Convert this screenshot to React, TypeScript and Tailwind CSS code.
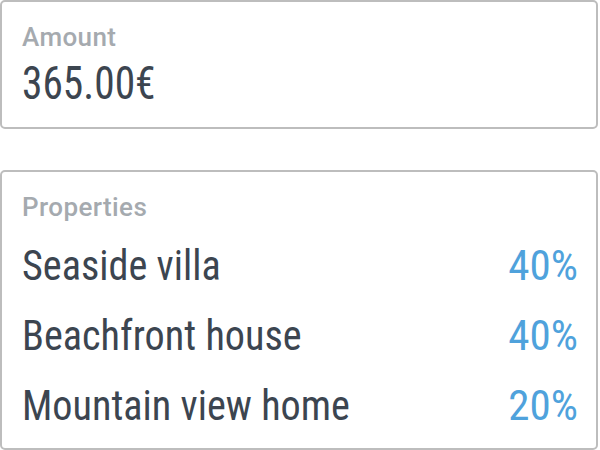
export default function App() {
  const rows = [
    { name: "Seaside villa", pct: "40%" },
    { name: "Beachfront house", pct: "40%" },
    { name: "Mountain view home", pct: "20%" },
  ];

  return (
    <main
      className="flex h-[450px] w-[600px] flex-col gap-[41px] bg-white pr-[2px]"
      style={{ fontFamily: "Roboto, 'Liberation Sans', sans-serif" }}
    >
      <section className="flex h-[129px] flex-col items-start rounded-[5px] border-2 border-[#bdbdbd] pl-5 pr-[18px] pt-[17px]">
        <span className="text-[26px] font-medium leading-[36px] tracking-[0.4px] text-[#a5aaaf]">
          Amount
        </span>
        <span className="mt-px inline-block origin-left scale-x-90 font-stretch-75% text-[46px] leading-[54px] text-[#3c4550]">
          365.00€
        </span>
      </section>
      <section className="flex flex-1 flex-col rounded-[5px] border-2 border-[#bdbdbd] pl-5 pr-[18px] pt-[17px]">
        <span className="text-[26px] font-medium leading-[36px] tracking-[0.4px] text-[#a5aaaf]">
          Properties
        </span>
        <div className="mt-[5px] flex flex-col">
          {rows.map((r) => (
            <div
              key={r.name}
              className="flex h-[70px] items-center justify-between font-stretch-75% text-[43px] leading-none"
            >
              <span className="inline-block origin-left scale-x-[0.935] text-[#3c4550]">
                {r.name}
              </span>
              <span className="text-[#4fa2dc]">{r.pct}</span>
            </div>
          ))}
        </div>
      </section>
    </main>
  );
}
